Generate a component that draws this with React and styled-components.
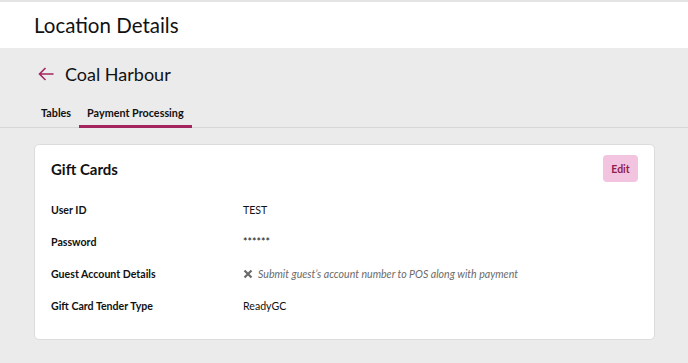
import React from 'react'
import styled, { createGlobalStyle } from 'styled-components'

const GlobalStyle = createGlobalStyle`
  html, body {
    margin: 0;
    padding: 0;
    background: #ebebeb;
    font-family: Lato, "Open Sans", sans-serif;
    color: #111;
  }
`

const Page = styled.div`
  min-height: 363px;
  background: #ebebeb;
  border-top: 2px solid #e4e4e4;
`

const Header = styled.header`
  background: #fff;
  height: 46px;
  display: flex;
  align-items: center;
  padding: 0 34px;
`

const Title = styled.h1`
  margin: 0;
  font-size: 20.5px;
  font-weight: 400;
`

const SubHeader = styled.div`
  display: flex;
  align-items: center;
  gap: 11px;
  padding: 16px 38px 0;
  height: 20px;
`

const BackButton = styled.button`
  border: 0;
  background: none;
  padding: 0;
  display: flex;
  color: #a3265e;
  cursor: pointer;
`

const LocationName = styled.h2`
  margin: 0;
  font-size: 18px;
  font-weight: 400;
`

const Tabs = styled.nav`
  display: flex;
  margin-top: 17px;
  padding-left: 33px;
  border-bottom: 1px solid #d6d6d6;
`

const Tab = styled.button`
  border: 0;
  background: none;
  font-family: inherit;
  font-size: 10.8px;
  font-weight: 700;
  color: #111;
  padding: 5px 8px 6px;
  border-bottom: 3px solid ${({ active }) => (active ? '#a3265e' : 'transparent')};
  margin-bottom: -1px;
  cursor: pointer;
`

const Content = styled.main`
  padding: 16px 33px 0 34px;
`

const Card = styled.section`
  background: #fff;
  border: 1px solid #dcdcdc;
  border-radius: 5px;
  padding: 10px 16px 17px 16px;
`

const CardHead = styled.div`
  display: flex;
  align-items: center;
  justify-content: space-between;
  margin-bottom: 12px;
`

const CardTitle = styled.h3`
  margin: 0;
  font-size: 15px;
  font-weight: 700;
`

const EditButton = styled.button`
  border: 0;
  border-radius: 4px;
  background: #f2c4df;
  color: #8e1d52;
  font-family: inherit;
  font-size: 10.5px;
  font-weight: 700;
  width: 35px;
  height: 27px;
  cursor: pointer;
`

const Row = styled.div`
  display: grid;
  grid-template-columns: 192px 1fr;
  align-items: center;
  height: 32px;
  font-size: 10.6px;
`

const Label = styled.div`
  font-weight: 700;
`

const Value = styled.div`
  display: flex;
  align-items: center;
  gap: 5px;
  color: ${({ muted }) => (muted ? '#6b6b6b' : '#111')};
  font-style: ${({ muted }) => (muted ? 'italic' : 'normal')};
`

const Cross = () => (
  <svg width="10" height="10" viewBox="0 0 10 10">
    <path d="M1.5 1.5 L8.5 8.5 M8.5 1.5 L1.5 8.5" stroke="#6b6b6b" strokeWidth="2.2" />
  </svg>
)

const rows = [
  { label: 'User ID', value: 'TEST' },
  { label: 'Password', value: '******' },
  { label: 'Guest Account Details', value: 'Submit guest’s account number to POS along with payment', off: true },
  { label: 'Gift Card Tender Type', value: 'ReadyGC' }
]

export default function App() {
  return (
    <Page>
      <GlobalStyle />
      <Header>
        <Title>Location Details</Title>
      </Header>
      <SubHeader>
        <BackButton aria-label="Back">
          <svg width="16" height="14" viewBox="0 0 16 14" fill="none" stroke="currentColor" strokeWidth="1.6">
            <path d="M15.5 7 H1.5 M7.5 1 L1.5 7 L7.5 13" />
          </svg>
        </BackButton>
        <LocationName>Coal Harbour</LocationName>
      </SubHeader>
      <Tabs>
        <Tab>Tables</Tab>
        <Tab active>Payment Processing</Tab>
      </Tabs>
      <Content>
        <Card>
          <CardHead>
            <CardTitle>Gift Cards</CardTitle>
            <EditButton>Edit</EditButton>
          </CardHead>
          {rows.map(row => (
            <Row key={row.label}>
              <Label>{row.label}</Label>
              <Value muted={row.off}>
                {row.off && <Cross />}
                {row.value}
              </Value>
            </Row>
          ))}
        </Card>
      </Content>
    </Page>
  )
}
